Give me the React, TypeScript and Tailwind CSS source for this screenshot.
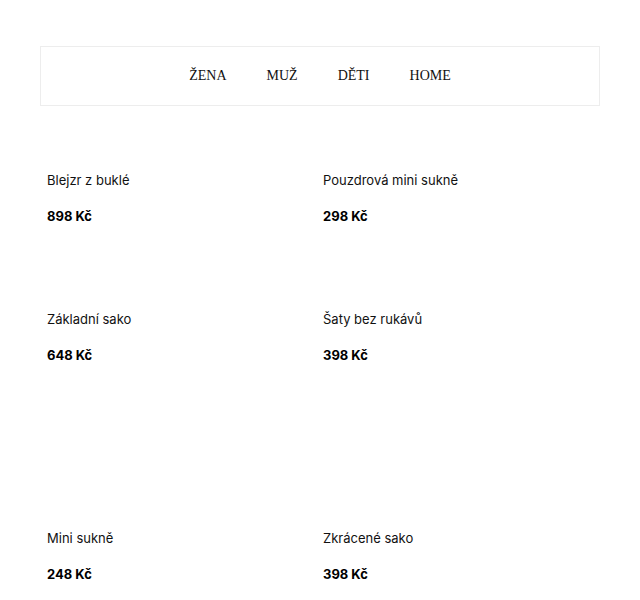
import React from 'react';

const products = [
  { name: 'Blejzr z buklé', price: '898 Kč', gap: 'h-[83px]' },
  { name: 'Pouzdrová mini sukně', price: '298 Kč', gap: 'h-[83px]' },
  { name: 'Základní sako', price: '648 Kč', gap: 'h-[163px]' },
  { name: 'Šaty bez rukávů', price: '398 Kč', gap: 'h-[163px]' },
  { name: 'Mini sukně', price: '248 Kč', gap: 'h-0' },
  { name: 'Zkrácené sako', price: '398 Kč', gap: 'h-0' },
];

export default function App() {
  return (
    <div className="min-h-[600px] bg-white px-[40px] pt-[46px]">
      {/* Navigation */}
      <nav
        className="flex h-[60px] items-center justify-center gap-[40px] border border-[#ededed] pb-[2px] text-[14px] text-[#111]"
        style={{ fontFamily: '"Liberation Serif", serif' }}
      >
        <a href="#">ŽENA</a>
        <a href="#">MUŽ</a>
        <a href="#">DĚTI</a>
        <a href="#">HOME</a>
      </nav>

      {/* Products */}
      <div
        className="grid grid-cols-[270px_270px] gap-x-[6px] pl-[7px] pt-[64px] text-[#111]"
        style={{ fontFamily: 'Inter, sans-serif' }}
      >
        {products.map((p) => (
          <div key={p.name} className="flex flex-col">
            <p className="text-[13px] leading-[20px]">{p.name}</p>
            <p className="mt-[16px] text-[13px] font-bold leading-[20px] text-black">{p.price}</p>
            <div className={p.gap} />
          </div>
        ))}
      </div>
    </div>
  );
}
